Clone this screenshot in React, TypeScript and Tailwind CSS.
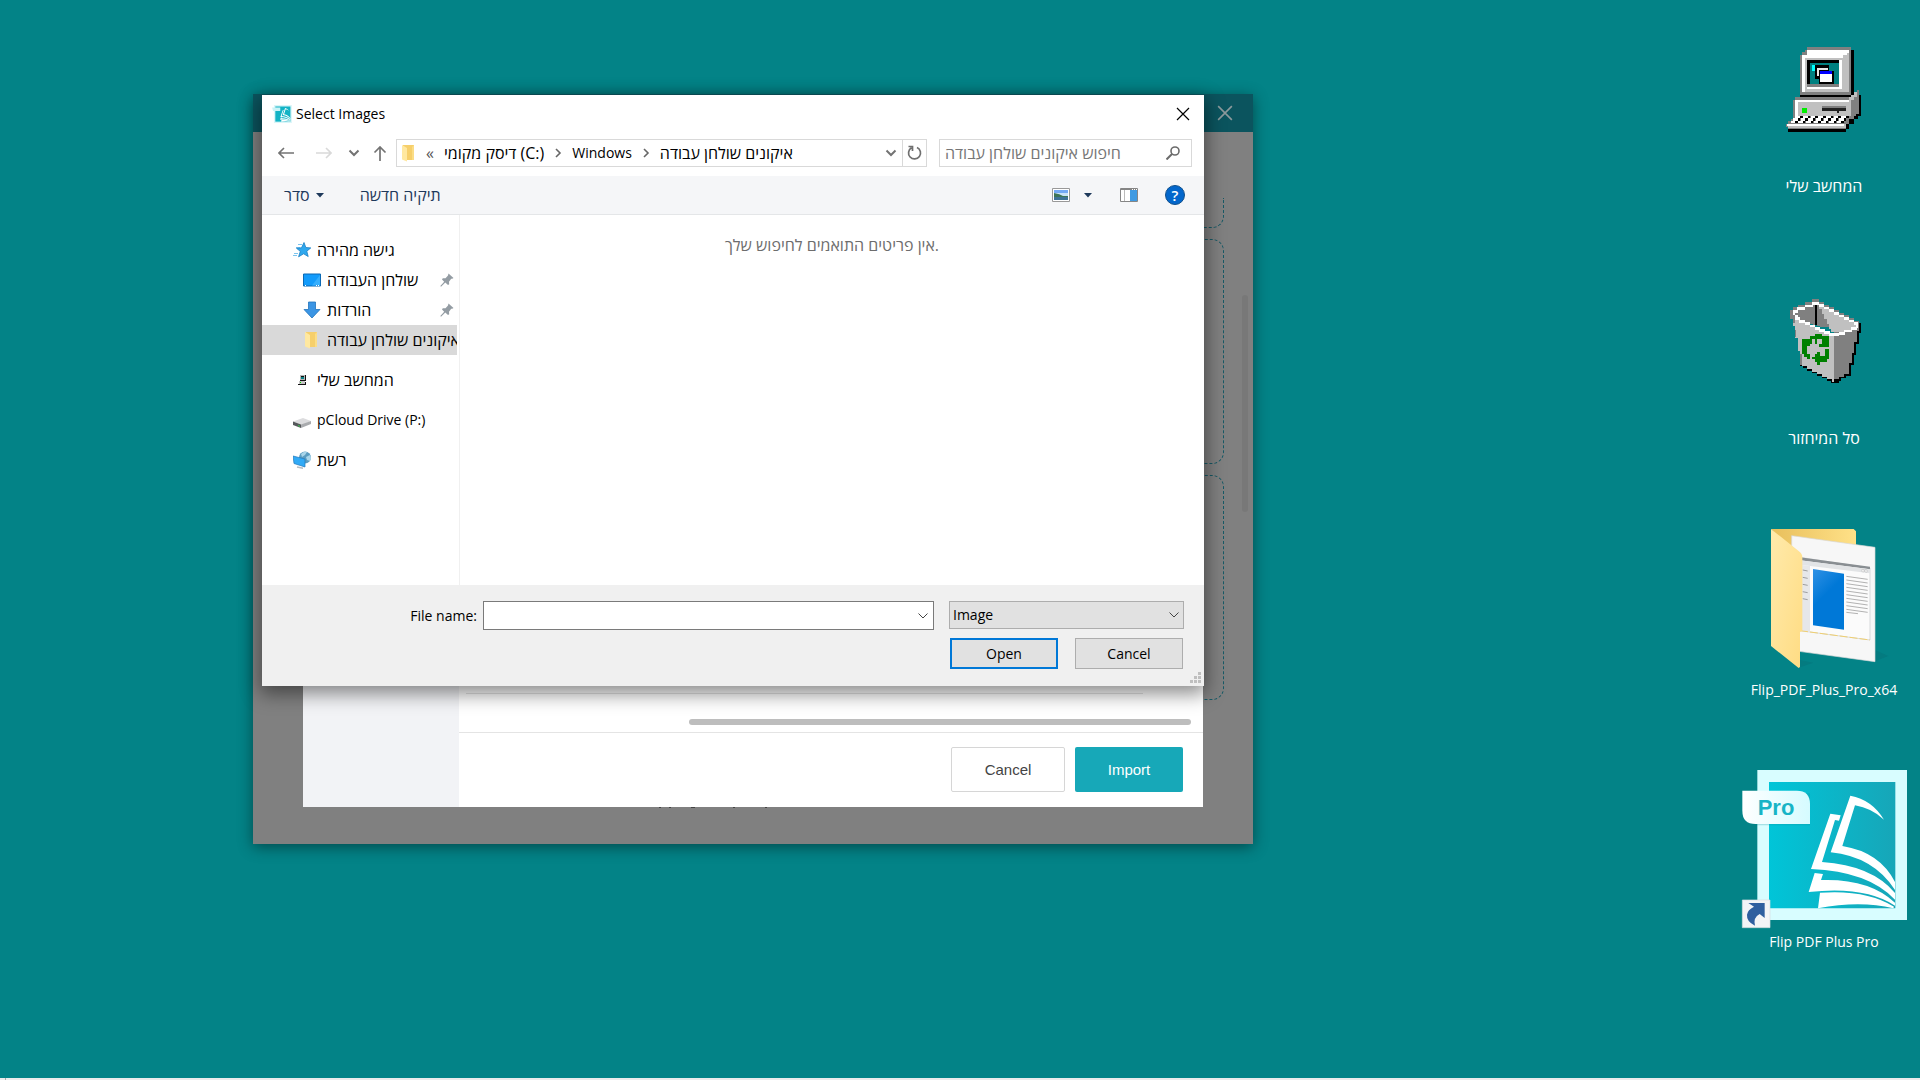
import React, { useState } from 'react';

const uiFont = "font-['Open_Sans','Noto_Sans',sans-serif]";

const Chevron = ({ dir, className = '' }: { dir: 'right' | 'down'; className?: string }) => (
  <svg width="12" height="12" viewBox="0 0 12 12" fill="none" stroke="currentColor" className={`shrink-0 ${className}`}>
    <path d={dir === 'right' ? 'M4 2l4 4-4 4' : 'M1.5 3.5L6 8l4.5-4.5'} />
  </svg>
);

const Caret = () => (
  <svg width="8" height="5" viewBox="0 0 8 5" fill="#1e395b">
    <path d="M0 0h8L4 4.6z" />
  </svg>
);

const CloseIcon = ({ size, width }: { size: number; width: number }) => (
  <svg width={size} height={size} viewBox="0 0 14 14" stroke="currentColor" strokeWidth={width}>
    <path d="M1 1l12 12M13 1L1 13" />
  </svg>
);

const FolderIcon = () => (
  <svg width="18" height="18" viewBox="0 0 18 18" className="shrink-0">
    <path d="M3 1h11v15H3z" fill="#f6cf6b" />
    <path d="M14 1v15h-2V3z" fill="#fbdd86" />
    <path d="M2 1l5 3v13.500l-5-2z" fill="#ffe8a0" />
  </svg>
);

const StarIcon = () => (
  <svg width="18" height="18" viewBox="0 0 18 18" className="shrink-0">
    <path d="M5 3.500h4M3 6.500h4M1 12.500h4M0 14.500h4" stroke="#7cc4ee" />
    <path d="M11 1.500l1.800 5 5 .4-4 3.300 1.400 5.300-4.600-2.700-5 3 1.700-5.500-3.800-3 5-.5z" fill="#2fa8ee" stroke="#1b7fc4" strokeWidth=".8" />
  </svg>
);

const DesktopIcon = () => (
  <svg width="18" height="18" viewBox="0 0 18 18" className="shrink-0">
    <path d="M.5 3h17v12H.5z" fill="#129bfb" stroke="#0b69b4" />
    <path d="M9 14.500L17 4v10.500z" fill="#35aefd" />
    <path d="M2 14.500h1m10 0h1m1 0h1" stroke="#fff" />
  </svg>
);

const DownloadIcon = () => (
  <svg width="18" height="18" viewBox="0 0 18 18" className="shrink-0">
    <path d="M5.500 1h7v7.500h4.500L9 17 1 8.500h4.500z" fill="#3b95e4" stroke="#2173bd" strokeWidth=".8" />
  </svg>
);

const SmallPcIcon = () => (
  <svg width="18" height="18" viewBox="0 0 18 18" className="shrink-0" shapeRendering="crispEdges">
    <path d="M7 4h6v6H7z" fill="#b8b8b8" />
    <path d="M8 5h3v3H8z" fill="#078084" />
    <path d="M12 4h1v6h-1zM7 9h6v1H7zM12 11h1v3h-1zM5 13h7v1H5zM8 5h3v1H8z" fill="#111" />
    <path d="M6 10h6v3H6z" fill="#c6c6c6" />
    <path d="M7 11h1v1H7z" fill="#0d0" />
  </svg>
);

const DriveIcon = () => (
  <svg width="18" height="18" viewBox="0 0 18 18" className="shrink-0">
    <path d="M0 10.500L10 7l8 3-9 4z" fill="#dcdcde" />
    <path d="M0 10.500L8 13.500V17L0 14z" fill="#55585b" />
    <path d="M8 13.500L18 10v3l-10 4z" fill="#a9abae" />
    <path d="M5 14.500l2 .8" stroke="#35d04a" />
  </svg>
);

const NetworkIcon = () => (
  <svg width="18" height="18" viewBox="0 0 18 18" className="shrink-0">
    <circle cx="12" cy="6.500" r="6" fill="#5b9cc0" />
    <path d="M8 3q3-3 6-2l-2 3-3 2zM13 6l4-2q2 3 0 6l-3-1z" fill="#a9d5ea" />
    <path d="M0 5l12 3v8L1 12.500z" fill="#31aaf6" stroke="#2379ba" strokeWidth=".7" />
    <path d="M4 16l6 1.200" stroke="#b5bcc2" strokeWidth="1.500" />
  </svg>
);

const PinIcon = () => (
  <svg width="14" height="14" viewBox="0 0 14 14" className="shrink-0">
    <path d="M8.500.5l5 4.500-1.300.8-1 0-2.200 3 .2 2.500-1.200.7-2.700-2.400L1 13.700.3 13l3.900-4.300L2 6.500l.8-1.300 2.700.1L8 2.500z" fill="#939ca3" />
  </svg>
);

const BookLogo = () => (
  <g fill="#fff">
    <path d="M361 107q65 12 101 72q-38-35-87-43l-38 122q112 18 158 108v24q-65-100-193-113z" />
    <path d="M301 161l31 5-5 16-12-2-39 126q150 10 219 93v20q-80-85-252-92z" />
    <path d="M254 339l25 3-6 18q145-5 222 68v9q-90-60-259-41z" />
    <path d="M270 398q140-10 222 42l-2 5q-100-25-226 0z" />
  </g>
);

const AppIcon = () => (
  <svg width="20" height="20" viewBox="34 4 500 500">
    <path d="M82 30h448v450H82z" fill="#d9f5f8" />
    <path d="M117 66h378v379H117z" fill="#12b3c5" />
    <path d="M37 92h203v90H60z" fill="#c9f3f7" />
    <BookLogo />
  </svg>
);

const ComputerIcon = () => (
  <g transform="translate(32 25) scale(.33333)" shapeRendering="crispEdges">
    <path d="M142 60h140v134h21v64h-8v8h-14v16h-14v15h-8v8H84v-10h36v-85h-2z" fill="#000" />
    <path d="M142 52h132v142H120V75h7v-8h8v-8h7z" fill="#808080" />
    <path d="M142 60h126v8h-8v118H127V75h15z" fill="#fff" />
    <path d="M135 75h125v111H135z" fill="#c0c0c0" />
    <path d="M260 68h7v118h-7z" fill="#c0c0c0" />
    <path d="M127 75h122v8H135v103h-8z" fill="#fff" />
    <path d="M142 90h104v80H142z" fill="#808080" />
    <path d="M142 90h96v8h-89v64h-7z" fill="#000" />
    <path d="M142 170h104v8H142zM238 90h8v80h-8z" fill="#fff" />
    <path d="M149 98h89v64h-89z" fill="#008080" />
    <path d="M156 105h8v18h-8z" fill="#0ff" />
    <path d="M164 105h44v17h13v39h-43v-15h-14z" fill="#000" />
    <path d="M170 113h34v8h-26v18h-8z" fill="#e8e8e8" />
    <path d="M180 123h35v8h-35z" fill="#00f" />
    <path d="M180 131h35v25h-35z" fill="#fff" />
    <path d="M106 202h168v62H99v-54h7z" fill="#808080" />
    <path d="M106 209h168v49H106z" fill="#c0c0c0" />
    <path d="M106 209h162v7H113v42h-7z" fill="#fff" />
    <path d="M274 194h8v-7h8v-7h6v72h-7v7h-8v7h-7z" fill="#808080" />
    <path d="M274 194h8v-7h8v15h-8v8h-8zM267 202h7v8h-7z" fill="#c0c0c0" />
    <path d="M127 234h14v14h-14z" fill="#0e0" />
    <path d="M186 227h73v8h-73z" fill="#808080" />
    <path d="M186 234h73v8h-73zM231 242h6v7h-6z" fill="#222" />
    <path d="M98 258h176v8h-7v15h-8v16H84v-7h-7v-9h7v-7h8v-8h6z" fill="#808080" />
    <path d="M84 281h175v14H84z" fill="#c0c0c0" />
    <path d="M82 281h170v8H82z" fill="#fff" />
    {[0, 1, 2, 3, 4, 5, 6].map((i) => (
      <g key={i} transform={`translate(${i * 23} 0)`}>
        <path d="M106 258h14v7h-7v8h-7v7H92v-7h7v-8h7z" fill="#fff" />
        <path d="M120 258h8v7h-8zM113 265h7v8h-7zM106 273h7v7h-7z" fill="#000" />
      </g>
    ))}
  </g>
);

// x, y, width of every step of the bin's white rim
const rimSteps = [
  [156, 66, 22], [134, 74, 24], [112, 82, 24], [98, 90, 16], [98, 98, 8], [105, 106, 8], [105, 112, 16],
  [118, 120, 18], [134, 127, 16], [149, 134, 16], [164, 141, 16], [178, 148, 17], [193, 154, 17],
  [207, 160, 30], [236, 156, 18], [252, 149, 23], [273, 142, 18], [287, 135, 8],
  [178, 73, 15], [192, 80, 16], [207, 88, 16], [222, 96, 16], [237, 104, 16], [252, 111, 16], [266, 119, 17], [281, 127, 14],
];

const RecycleBinIcon = () => (
  <g transform="translate(32 23) scale(.33333)" shapeRendering="crispEdges">
    <path d="M295 129h8v31h-6v32h-8v32h-7v32h-8v32h-16v7h-14v8h-8v7h-22v-7h-14v-8h-14v-8h-15v-7h-14v-8h-15v-7h-14v-8h-8v-15z" fill="#000" />
    <path d="M156 58h22v8h14v8h15v8h15v8h15v8h14v8h16v8h15v8h14v30h-6v34h-8v32h-7v32h-8v32h-15v8h-14v7h-15v-157h-40L98 118h-7V90h7v-8h15v-8h22v-8h21z" fill="#808080" />
    <path d="M98 118l24 4 45 22 40 20h15v141h-7v-8h-15v-7h-15v-8h-14v-7h-15v-8h-14v-8h-16v-8h-6v-38h-7v-38h-8v-38h-7z" fill="#c0c0c0" />
    <path d="M98 118h8v12h-8zM105 150h4v20h-4zM120 222h6v32h-6z" fill="#808080" />
    <path d="M178 80h14v8h15v8h15v8h15v8h15v7h14v8h15v8h7v8h-14v7h-22v6h-38v-8h-7v-16h-7v-16h-8v-14h-7v-14h-7z" fill="#c0c0c0" />
    <path d="M164 74h8v62h-8z" fill="#000" />
    {rimSteps.map(([x, y, w]) => (
      <rect key={`${x}-${y}`} x={x} y={y} width={w} height="8" fill="#fff" />
    ))}
    <path d="M149 169h15v-7h22v7h22v31h-31v-9h8v-14h-14v14h-7v-14h-15zM127 177h29v15h-7v7h-7v22h7v17h-9v-7h-7v-9h-6zM208 207v31h-7v8h-22v9h-8v-9h-7v-8h-8v-7h8v-8h7v-8h8v13h15v-21z" fill="#008000" />
  </g>
);

const ArchiveFolderIcon = () => (
  <g transform="translate(12 1) scale(.33333)">
    <defs>
      <linearGradient id="folderBack" x1="0" x2="1">
        <stop offset="0" stopColor="#e8bf5c" />
        <stop offset="1" stopColor="#ffe188" />
      </linearGradient>
      <linearGradient id="folderFront" x1="0" x2="1" y2="1">
        <stop offset="0" stopColor="#ffeaab" />
        <stop offset="1" stopColor="#ffdc83" />
      </linearGradient>
      <linearGradient id="preview" x1="0" x2=".5" y2="1">
        <stop offset="0" stopColor="#2f91e5" />
        <stop offset=".5" stopColor="#0078d7" />
      </linearGradient>
    </defs>
    <path d="M405 420l40 18-40 16zM180 450l40 8-40 14z" fill="#047b80" />
    <path d="M93 57h248l7 7v80H180z" fill="url(#folderBack)" />
    <path d="M155 77l250 35v343l-250-34z" fill="#f7f7f7" stroke="#d8d8d8" strokeWidth="2" />
    <path d="M180 142l210 32v216l-210-28z" fill="#fbfbfb" stroke="#c9cccf" strokeWidth="2" />
    <path d="M180 142l210 28v8l-210-27z" fill="#898e92" />
    <path d="M180 151l210 27v12l-210-26z" fill="#e2e4e6" />
    <path d="M180 164l30 4v197l-30-4z" fill="#e6e7e9" />
    <path d="M188 180l15 3M188 202l15 3M188 223l15 3M188 245l15 3M188 266l15 3" stroke="#777" strokeWidth="2" />
    <path d="M219 177l93 14v168l-93-13z" fill="url(#preview)" />
    {[0, 1, 2, 3, 4, 5, 6, 7, 8, 9].map((i) => (
      <path key={i} d={`M319 ${199 + i * 11}l64 9`} stroke="#8c8c8c" strokeWidth="2" />
    ))}
    <path d="M319 307l35 4" stroke="#8c8c8c" strokeWidth="2" />
    <path d="M366 178l6 1v7l-6-1zM375 179l6 1v7l-6-1z" fill="#fff" stroke="#999" />
    <path d="M180 362l210 28" stroke="#f0cf6f" strokeWidth="3" strokeDasharray="24 6" />
    <path d="M93 57l82 65q12 8 12 20v220l-7 4v105l-4 3-83-66z" fill="url(#folderFront)" />
  </g>
);

const FlipPdfIcon = () => (
  <g transform="translate(2 -1) scale(.33333)">
    <defs>
      <linearGradient id="cover" x1="0" x2="1">
        <stop offset="0" stopColor="#00c5d8" />
        <stop offset="1" stopColor="#17a6b8" />
      </linearGradient>
      <linearGradient id="badge" x1="0" x2="1">
        <stop offset="0" stopColor="#ffffff" />
        <stop offset="1" stopColor="#d5fbff" />
      </linearGradient>
    </defs>
    <path d="M82 30h449v450H82z" fill="#d8fdff" />
    <path d="M117 66h379v379H117z" fill="url(#cover)" />
    <path d="M50 100h190v96H80z" fill="#0b8e9a" opacity=".25" />
    <path d="M37 92h163q40 0 40 40v60H77q-40 0-40-40z" fill="url(#badge)" />
    <text x="138" y="165" textAnchor="middle" fill="#17b4c6" className="font-['Liberation_Sans',sans-serif] text-[66px] font-bold">Pro</text>
    <BookLogo />
    <path d="M37 420h83v83H37z" fill="#f3f4f6" stroke="#dadde0" strokeWidth="2" />
    <path d="M55 429h49v45l-15-12q-20 10-14 35q-26-13-24-33q2-15 21-24z" fill="#2f5f9f" />
  </g>
);

const desktopItems = [
  { label: 'המחשב שלי', icon: <ComputerIcon />, text: 'text-[16px]' },
  { label: 'סל המיחזור', icon: <RecycleBinIcon />, text: 'text-[16px]' },
  { label: 'Flip_PDF_Plus_Pro_x64', icon: <ArchiveFolderIcon />, text: 'text-[14px]' },
  { label: 'Flip PDF Plus Pro', icon: <FlipPdfIcon />, text: 'text-[14px]' },
];

const navItems = [
  { label: 'גישה מהירה', icon: <StarIcon />, text: 'text-[16px]', child: false, pinned: false, selected: false, gap: false },
  { label: 'שולחן העבודה', icon: <DesktopIcon />, text: 'text-[16px]', child: true, pinned: true, selected: false, gap: false },
  { label: 'הורדות', icon: <DownloadIcon />, text: 'text-[16px]', child: true, pinned: true, selected: false, gap: false },
  { label: 'איקונים שולחן עבודה', icon: <FolderIcon />, text: 'text-[16px]', child: true, pinned: false, selected: true, gap: false },
  { label: 'המחשב שלי', icon: <SmallPcIcon />, text: 'text-[16px]', child: false, pinned: false, selected: false, gap: true },
  { label: 'pCloud Drive (P:)', icon: <DriveIcon />, text: 'text-[14px]', child: false, pinned: false, selected: false, gap: true },
  { label: 'רשת', icon: <NetworkIcon />, text: 'text-[16px]', child: false, pinned: false, selected: false, gap: true },
];

const DesktopIcons = () => (
  <div className="ml-auto flex w-48 flex-col gap-[59px] pt-[5px]">
    {desktopItems.map((item) => (
      <button key={item.label} className={`flex flex-col items-center gap-px leading-6 text-white ${item.text}`}>
        <svg width="192" height="168" viewBox="0 0 192 168">{item.icon}</svg>
        <span className="whitespace-nowrap">{item.label}</span>
      </button>
    ))}
  </div>
);

/* Dimmed application window that owns both dialogs */
const AppWindow = () => (
  <div className="absolute top-[94px] left-[253px] flex h-[750px] w-[1000px] flex-col bg-[#808080] shadow-[0_3px_14px_rgba(0,0,0,0.45)]">
    <div className="flex h-[38px] shrink-0 items-center justify-end bg-[#0b545e] pr-5 text-[#8d9a9c]">
      <button aria-label="Close window"><CloseIcon size={16} width={1.4} /></button>
    </div>
    <div className="flex flex-1 flex-col gap-[11px] overflow-hidden pt-[66px] pr-[29px] pl-16">
      <div className="h-[30px] rounded-b-xl border border-t-0 border-dashed border-[#175a66]" />
      <div className="h-[225px] rounded-xl border border-dashed border-[#175a66]" />
      <div className="h-[225px] rounded-xl border border-dashed border-[#175a66]" />
    </div>
    <div className="absolute top-[201px] right-[5px] h-[217px] w-1.5 rounded-full bg-[#787878]" />
    <svg width="110" height="1" className="absolute top-[713px] left-[406px]" stroke="#444">
      <path d="M0 .5h2M10 .5h2M32 .5h4M74 .5h2M106 .5h2" />
    </svg>
  </div>
);

const ImportPanel = () => (
  <div className="absolute top-[145px] left-[303px] flex h-[662px] w-[900px] bg-white font-['Liberation_Sans',sans-serif]">
    <div className="w-[156px] shrink-0 bg-[#f2f3f6]" />
    <div className="flex flex-1 flex-col justify-end">
      <div className="mr-[60px] ml-[7px] border-b border-[#e2e2e2]" />
      <div className="mt-[25px] mr-3 mb-[7px] ml-[230px] h-1.5 rounded-full bg-[#bdbdbd]" />
      <div className="flex h-[75px] items-start justify-end gap-2.5 border-t border-[#e4e4e4] pt-3.5 pr-5 text-[15px]">
        <button className="h-[45px] w-[114px] rounded-xs border border-[#d6d6d6] text-[#444]">Cancel</button>
        <button className="h-[45px] w-[108px] rounded-xs bg-[#17a8b8] text-white">Import</button>
      </div>
    </div>
  </div>
);

const AddressBar = () => (
  <div className="flex items-center pt-[7px] pr-3 pb-[9px] pl-4">
    <div className="flex items-center text-[#737373]">
      <button aria-label="Back">
        <svg width="16" height="12" viewBox="0 0 16 12" fill="none" stroke="currentColor" strokeWidth="1.600"><path d="M6 1L1 6l5 5M1 6h15" /></svg>
      </button>
      <button aria-label="Forward" className="ml-[22px] text-[#d9d9d9]">
        <svg width="16" height="12" viewBox="0 0 16 12" fill="none" stroke="currentColor" strokeWidth="1.600"><path d="M10 1l5 5-5 5M15 6H0" /></svg>
      </button>
      <button aria-label="Recent locations" className="ml-4"><Chevron dir="down" className="stroke-2" /></button>
      <button aria-label="Up" className="ml-[13px]">
        <svg width="14" height="15" viewBox="0 0 14 15" fill="none" stroke="currentColor" strokeWidth="1.700"><path d="M1.500 6.500L7 1l5.500 5.500M7 1v14" /></svg>
      </button>
    </div>
    <div className="ml-[9px] flex h-7 flex-1 items-center border border-[#d9d9d9] pl-[3px]">
      <FolderIcon />
      <span className="ml-2 text-[16px] leading-5 text-[#555]">«</span>
      <button className="ml-2.5 whitespace-nowrap text-[16px]">דיסק מקומי (C:)</button>
      <Chevron dir="right" className="mx-2 stroke-[1.600] text-[#666]" />
      <button>Windows</button>
      <Chevron dir="right" className="mx-2 stroke-[1.600] text-[#666]" />
      <button className="whitespace-nowrap text-[16px]">איקונים שולחן עבודה</button>
      <button aria-label="Previous locations" className="ml-auto pr-[5px] text-[#737373]"><Chevron dir="down" className="stroke-2" /></button>
      <button aria-label="Refresh" className="flex h-full w-6 items-center justify-center border-l border-[#d9d9d9] text-[#6f6f6f]">
        <svg width="15" height="16" viewBox="0 0 15 16" fill="none" stroke="currentColor" strokeWidth="1.700">
          <path d="M10 2.500a6 6 0 1 1-5.500.3M1.500 1.500h4v4.500" />
        </svg>
      </button>
    </div>
    <div className="ml-3 flex h-7 w-[253px] items-center border border-[#d9d9d9] pr-[11px] pl-[5px]">
      <input
        type="text"
        aria-label="Search"
        placeholder="חיפוש איקונים שולחן עבודה"
        className="min-w-0 flex-1 text-[16px] outline-none placeholder:text-[#767676]"
      />
      <svg width="14" height="14" viewBox="0 0 14 14" fill="none" stroke="#6b6b6b" strokeWidth="1.600">
        <circle cx="9" cy="5" r="4" />
        <path d="M6 8l-5.500 5.500" strokeWidth="2" />
      </svg>
    </div>
  </div>
);

const Toolbar = () => (
  <div className="flex h-[39px] items-center border-b border-[#e4e6e8] bg-[#f5f6f8] pr-[19px] pl-[22px] text-[#1e395b]">
    <button className="flex items-center gap-1.5 text-[16px]">סדר <Caret /></button>
    <button className="ml-9 text-[16px]">תיקיה חדשה</button>
    <button aria-label="View" className="ml-auto">
      <svg width="18" height="14" viewBox="0 0 18 14">
        <path d="M.5.5h17v13H.5z" fill="#fff" stroke="#999" />
        <path d="M2 2h14v4H2z" fill="#73a9f5" />
        <path d="M2 5h14v4H2z" fill="#c9e2f8" />
        <path d="M2 5q6 1 9 3h5v1H2z" fill="#3d7558" />
        <path d="M2 9h14v3H2z" fill="#3e7297" />
      </svg>
    </button>
    <button aria-label="View options" className="ml-3.5"><Caret /></button>
    <button aria-label="Preview pane" className="ml-7">
      <svg width="18" height="14" viewBox="0 0 18 14">
        <path d="M.5.5h17v13H.5z" fill="#fff" stroke="#858585" />
        <path d="M1 1h16v1H1z" fill="#858585" />
        <path d="M4.500 2v11" stroke="#bbb" />
        <path d="M10 2h7v11h-7z" fill="#3f9ae2" />
        <path d="M12 1.500h1m1 0h1m1 0h1" stroke="#fff" />
      </svg>
    </button>
    <button aria-label="Help" className="ml-[27px] flex size-5 items-center justify-center rounded-full border border-[#11508c] bg-[#0367cc] text-[15px] leading-5 font-semibold text-white">?</button>
  </div>
);

const NavPane = () => (
  <nav className="w-[198px] shrink-0 overflow-hidden border-r border-[#f0f0f0] pt-5 pr-0.5">
    {navItems.map((item) => (
      <button
        key={item.label}
        className={`flex h-[30px] w-full items-center gap-1.5 overflow-hidden whitespace-nowrap ${item.text} ${item.child ? 'pl-[41px]' : 'pl-[31px]'} ${item.selected ? 'bg-[#d9d9d9]' : ''} ${item.gap ? 'mt-2.5' : ''}`}
      >
        {item.icon}
        <span>{item.label}</span>
        {item.pinned && <span className="mr-[3px] ml-auto"><PinIcon /></span>}
      </button>
    ))}
  </nav>
);

const SelectDialog = () => {
  const [fileName, setFileName] = useState('');

  return (
    <div className="absolute top-[95px] left-[262px] w-[942px] bg-white text-black shadow-[0_6px_18px_2px_rgba(0,0,0,0.45)]">
      <div className="flex h-[37px] items-center pr-3.5 pl-2.5">
        <AppIcon />
        <h1 className="ml-1">Select Images</h1>
        <button aria-label="Close" className="ml-auto"><CloseIcon size={14} width={1.2} /></button>
      </div>
      <AddressBar />
      <Toolbar />
      <div className="flex h-[370px]">
        <NavPane />
        <p className="flex-1 pt-5 text-center text-[16px] leading-5 text-[#6d6d6d]">אין פריטים התואמים לחיפוש שלך.</p>
      </div>
      <div className="relative flex h-[101px] gap-[15px] bg-[#f0f0f0] pt-4 pr-5">
        <div className="flex flex-1 items-start justify-end gap-1.5">
          <label htmlFor="file-name" className="leading-[29px]">File name:</label>
          <div className="flex h-[29px] w-[451px] items-center border border-[#7a7a7a] bg-white pr-1">
            <input
              id="file-name"
              type="text"
              value={fileName}
              onChange={(e) => setFileName(e.target.value)}
              className="min-w-0 flex-1 px-1 outline-none"
            />
            <button aria-label="Recent file names" className="text-[#444]"><Chevron dir="down" /></button>
          </div>
        </div>
        <div className="w-[235px]">
          <div className="relative">
            <select aria-label="File type" className="block h-7 w-full appearance-none border border-[#adadad] bg-[#e1e1e1] px-[3px]">
              <option>Image</option>
            </select>
            <Chevron dir="down" className="pointer-events-none absolute top-2 right-1 text-[#444]" />
          </div>
          <div className="mt-[9px] flex justify-between px-px">
            <button className="h-[31px] w-[108px] border-2 border-[#0078d7] bg-[#e1e1e1]">Open</button>
            <button className="h-[31px] w-[108px] border border-[#adadad] bg-[#e1e1e1]">Cancel</button>
          </div>
        </div>
        <svg width="11" height="11" viewBox="0 0 11 11" fill="#bfbfbf" className="absolute right-[3px] bottom-[3px]">
          <path d="M8 0h3v3H8zM8 4h3v3H8zM4 4h3v3H4zM8 8h3v3H8zM4 8h3v3H4zM0 8h3v3H0z" />
        </svg>
      </div>
    </div>
  );
};

export default function App() {
  return (
    <main className={`relative flex min-h-screen flex-col overflow-hidden bg-[#038387] text-[14px] leading-5 ${uiFont}`}>
      <DesktopIcons />
      <AppWindow />
      <ImportPanel />
      <SelectDialog />
      <div className="mt-auto h-0.5 bg-[#ececec] pl-[5px]">
        <div className="h-full w-px bg-[#aaa]" />
      </div>
    </main>
  );
}
